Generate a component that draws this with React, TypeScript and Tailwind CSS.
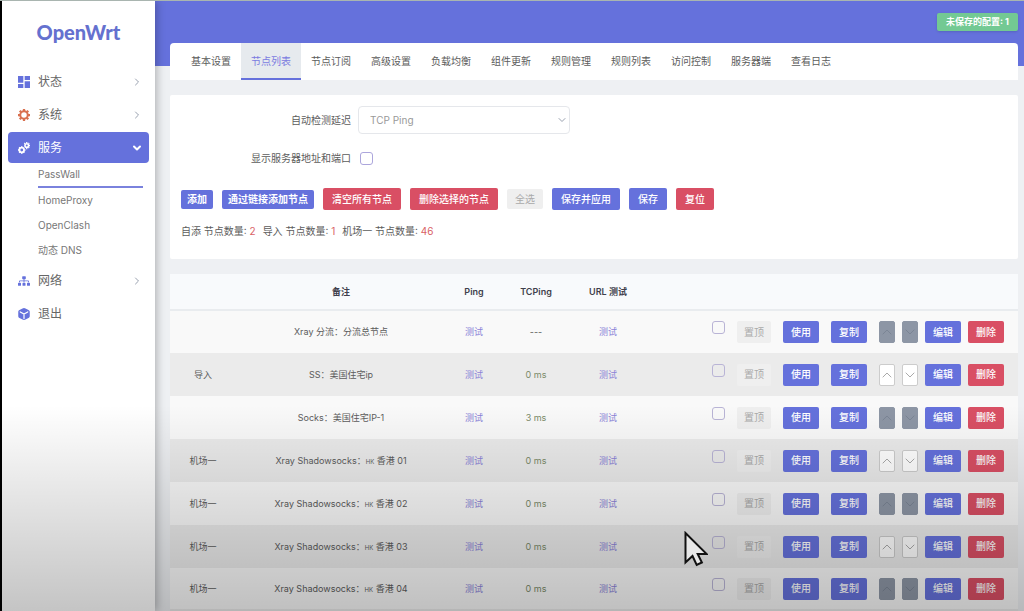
import React, { useState } from 'react';
import { ChevronDown, ChevronRight, ChevronUp } from 'lucide-react';
import { FaSitemap } from 'react-icons/fa';
import { MdDashboard } from 'react-icons/md';

interface ServerNode {
  id: number;
  group?: string;
  name: string;
  region?: string;
  title?: string;
  latency: string;
}

const tabs = [
  '基本设置',
  '节点列表',
  '节点订阅',
  '高级设置',
  '负载均衡',
  '组件更新',
  '规则管理',
  '规则列表',
  '访问控制',
  '服务器端',
  '查看日志',
];

const services = ['PassWall', 'HomeProxy', 'OpenClash', '动态 DNS'];

const counts = [
  { label: '自添 节点数量:', value: 2 },
  { label: '导入 节点数量:', value: 1 },
  { label: '机场一 节点数量:', value: 46 },
];

const nodes: ServerNode[] = [
  { id: 1, name: 'Xray 分流：分流总节点', latency: '---' },
  { id: 2, group: '导入', name: 'SS：美国住宅ip', latency: '0 ms' },
  { id: 3, name: 'Socks：美国住宅IP-1', latency: '3 ms' },
  { id: 4, group: '机场一', name: 'Xray Shadowsocks：', region: 'HK', title: '香港 01', latency: '0 ms' },
  { id: 5, group: '机场一', name: 'Xray Shadowsocks：', region: 'HK', title: '香港 02', latency: '0 ms' },
  { id: 6, group: '机场一', name: 'Xray Shadowsocks：', region: 'HK', title: '香港 03', latency: '0 ms' },
  { id: 7, group: '机场一', name: 'Xray Shadowsocks：', region: 'HK', title: '香港 04', latency: '0 ms' },
];

const GearIcon = () => (
  <svg viewBox="0 0 24 24" className="size-3 text-[#d9704f]" fill="none" stroke="currentColor">
    <circle cx="12" cy="12" r="7.5" strokeWidth="4" />
    <path
      strokeWidth="4.5"
      d="M12 0v4M12 20v4M0 12h4M20 12h4M3.5 3.5l2.8 2.8M17.7 17.7l2.8 2.8M3.5 20.5l2.8-2.8M17.7 6.3l2.8-2.8"
    />
  </svg>
);

const CogsIcon = () => (
  <svg viewBox="0 0 24 24" className="size-3" fill="none" stroke="currentColor">
    <circle cx="7.5" cy="16" r="4.6" strokeWidth="3.6" />
    <path strokeWidth="3" d="M7.5 8.5v2M7.5 21.5v2M0 16h2M13 16h2M2.2 10.7l1.4 1.4M11.4 19.9l1.4 1.4M2.2 21.3l1.4-1.4" />
    <circle cx="17.5" cy="7" r="3.6" strokeWidth="3.2" />
    <path strokeWidth="2.6" d="M17.5 0v2M17.5 12v2.4M22 7h2M21 3.5l1.4-1.4M21 10.5l1.4 1.4M14 3.5l-1.4-1.4" />
  </svg>
);

const CubeIcon = () => (
  <svg viewBox="0 0 24 24" className="size-3">
    <path
      fill="currentColor"
      d="M12 0c1 0 2 .4 3 1l6 3.2c1.6.9 2.5 2.2 2.5 4V16c0 1.8-1 3.2-2.5 4l-6 3.2c-2 1-4 1-6 0L3 20C1.4 19.2.5 17.8.5 16V8.2c0-1.8 1-3.2 2.5-4L9 1c1-.6 2-1 3-1z"
    />
    <path fill="none" stroke="white" strokeWidth="2.4" strokeLinecap="round" d="M4.5 7.8L12 12l7.5-4.2M12 12v9" />
  </svg>
);

interface MenuItemProps {
  icon: React.ReactNode;
  label: string;
  arrow?: React.ReactNode;
  active?: boolean;
}

const MenuItem = ({ icon, label, arrow, active }: MenuItemProps) => (
  <a
    href="#"
    className={`flex h-[31px] items-center gap-2 rounded pr-1.5 pl-2.5 text-xs ${
      active ? 'bg-[#6571dc] text-white' : 'text-[#666]'
    }`}
  >
    <span className={`flex w-3 shrink-0 justify-center ${active ? 'text-white' : 'text-[#6571dc]'}`}>{icon}</span>
    <span className="flex-1">{label}</span>
    {arrow}
  </a>
);

const Sidebar = () => (
  <aside className="z-10 w-[155px] shrink-0 border-l-2 border-black bg-white px-1.5 shadow-[2px_0_8px_rgba(0,0,0,0.25)]">
    <a
      href="#"
      className="mb-3 flex h-[53px] items-end justify-center pb-2 font-[Lato] text-xl leading-7 font-black text-[#6571cf]"
    >
      OpenWrt
    </a>
    <nav className="flex flex-col gap-0.5">
      <MenuItem
        icon={<MdDashboard className="size-4 shrink-0" />}
        label="状态"
        arrow={<ChevronRight size={12} className="text-gray-400" />}
      />
      <MenuItem icon={<GearIcon />} label="系统" arrow={<ChevronRight size={12} className="text-gray-400" />} />
      <div>
        <MenuItem icon={<CogsIcon />} label="服务" arrow={<ChevronDown size={12} strokeWidth={4} />} active />
        <ul className="pr-1.5 pl-[30px] text-[10px] text-[#777]">
          {services.map((service, i) => (
            <li key={service}>
              <a
                href="#"
                className={`flex h-[25px] items-center ${i === 0 ? 'border-b-2 border-[#7a82dd]' : ''}`}
              >
                {service}
              </a>
            </li>
          ))}
        </ul>
      </div>
      <MenuItem
        icon={<FaSitemap className="size-3" />}
        label="网络"
        arrow={<ChevronRight size={12} className="text-gray-400" />}
      />
      <MenuItem icon={<CubeIcon />} label="退出" />
    </nav>
  </aside>
);

const NodeRow = ({ node, striped }: { node: ServerNode; striped: boolean }) => {
  const arrowStyle = striped
    ? 'border border-[#ccc] bg-white text-[#aaa]'
    : 'border border-[#8d96a5] bg-[#8d96a5] text-[#7b8595]';

  return (
    <tr className={striped ? 'h-[43px] bg-[#ebebeb]' : 'h-[43px] bg-[#f9f9f9]'}>
      <td>{node.group}</td>
      <td>
        {node.name}
        {node.region && <span className="text-[6px]">{node.region}</span>} {node.title}
      </td>
      <td>
        <a href="#" className="text-[#8b83d8]">测试</a>
      </td>
      <td className={node.latency === '---' ? '' : 'text-[#7b8a68]'}>{node.latency}</td>
      <td>
        <a href="#" className="text-[#8b83d8]">测试</a>
      </td>
      <td className="pr-3.5">
        <div className="flex justify-end gap-3 text-[10px] font-medium text-white">
          <input
            type="checkbox"
            aria-label="选择节点"
            className="size-[13px] appearance-none rounded-[3px] border border-[#b9b4d6] checked:bg-[#6571dc]"
          />
          <button disabled className="h-[22px] rounded-xs bg-[#efefef] px-[7px] font-normal text-[#aaa]">
            置顶
          </button>
          <button className="h-[22px] rounded-xs bg-[#6571dc] px-2">使用</button>
          <button className="h-[22px] rounded-xs bg-[#6571dc] px-2">复制</button>
          <div className="flex gap-[7px]">
            <button aria-label="上移" className={`flex h-[22px] w-4 items-center justify-center rounded-xs ${arrowStyle}`}>
              <ChevronUp size={16} strokeWidth={1.5} className="shrink-0" />
            </button>
            <button aria-label="下移" className={`flex h-[22px] w-4 items-center justify-center rounded-xs ${arrowStyle}`}>
              <ChevronDown size={16} strokeWidth={1.5} className="shrink-0" />
            </button>
            <button className="h-[22px] rounded-xs bg-[#6571dc] px-2">编辑</button>
            <button className="h-[22px] rounded-xs bg-[#d94f64] px-2">删除</button>
          </div>
        </div>
      </td>
    </tr>
  );
};

const App = () => {
  const [method, setMethod] = useState('tcping');
  const [showAddress, setShowAddress] = useState(false);

  return (
    <div className="relative flex h-screen overflow-hidden border-t border-[#a9b5b0] font-[Inter,'Noto_Sans_CJK_SC',sans-serif] text-[#5c5c5c]">
      <Sidebar />

      <main className="min-w-0 flex-1 bg-[linear-gradient(#6571dc_65px,#eef0f3_65px)] pr-1.5 pl-[15px]">
        <header className="flex h-[42px] items-center justify-end">
          <a
            href="#"
            className="flex h-[18px] items-center rounded-xs bg-[#73c993] px-[9px] text-[9px] font-bold text-white shadow-sm"
          >
            未保存的配置: 1
          </a>
        </header>

        {/* Tabs */}
        <nav className="flex h-[37px] rounded-t bg-white px-[11px] text-[10px]">
          {tabs.map((tab) => (
            <a
              key={tab}
              href="#"
              className={`flex items-center border-y-2 border-t-transparent px-2.5 ${
                tab === '节点列表' ? 'border-b-[#6571dc] bg-[#e6eaee] text-[#7b7be0]' : 'border-b-transparent'
              }`}
            >
              {tab}
            </a>
          ))}
        </nav>

        {/* Settings */}
        <section className="mt-[15px] rounded-xs bg-white px-[11px] pt-[11px] pb-5 text-[10px]">
          <div className="flex items-center gap-[7px]">
            <label htmlFor="method" className="w-[170px] text-right">
              自动检测延迟
            </label>
            <div className="relative w-[212px]">
              <select
                id="method"
                value={method}
                onChange={(e) => setMethod(e.target.value)}
                className="h-7 w-full appearance-none rounded-sm border border-gray-200 bg-white px-[11px] text-[#999]"
              >
                <option value="tcping">TCP Ping</option>
                <option value="ping">Ping</option>
              </select>
              <ChevronDown size={12} className="pointer-events-none absolute top-2 right-0.5 text-gray-400" />
            </div>
          </div>
          <div className="mt-[11px] flex h-[26px] items-center gap-[9px]">
            <label htmlFor="show-address" className="w-[170px] text-right">
              显示服务器地址和端口
            </label>
            <input
              id="show-address"
              type="checkbox"
              checked={showAddress}
              onChange={(e) => setShowAddress(e.target.checked)}
              className="size-[13px] appearance-none rounded-[3px] border border-[#aca6dc] checked:bg-[#6571dc]"
            />
          </div>

          <div className="mt-[17px] flex items-center gap-[9px] font-medium text-white">
            <button className="h-[19px] rounded-xs bg-[#6571dc] px-1.5 font-bold">添加</button>
            <button className="h-[19px] rounded-xs bg-[#6571dc] px-1.5 font-bold">通过链接添加节点</button>
            <button className="h-[22px] rounded-xs bg-[#d94f64] px-[9px]">清空所有节点</button>
            <button className="h-[22px] rounded-xs bg-[#d94f64] px-[9px]">删除选择的节点</button>
            <button className="h-5 rounded-xs bg-[#efefef] px-2 font-normal text-[#aaa]">全选</button>
            <button className="h-[22px] rounded-xs bg-[#6571dc] px-[9px]">保存并应用</button>
            <button className="h-[22px] rounded-xs bg-[#6571dc] px-[9px]">保存</button>
            <button className="h-[22px] rounded-xs bg-[#d94f64] px-[9px]">复位</button>
          </div>

          <div className="mt-[13px] flex h-4 items-center gap-[7px]">
            {counts.map((count) => (
              <span key={count.label}>
                {count.label} <span className="text-[#d95f66]">{count.value}</span>
              </span>
            ))}
          </div>
        </section>

        {/* Node list */}
        <table className="mt-[15px] w-full table-fixed border-b-4 border-[#ebebeb] text-center text-[9px]">
          <thead>
            <tr className="h-9 border-b-2 border-[#e9ecef] bg-[#f8fafc] text-[#3f3f4c]">
              <th className="w-[66px]" />
              <th className="w-[210px] font-semibold">备注</th>
              <th className="w-14 font-semibold">Ping</th>
              <th className="w-[68px] font-semibold">TCPing</th>
              <th className="w-[76px] font-semibold">URL 测试</th>
              <th />
            </tr>
          </thead>
          <tbody>
            {nodes.map((node, i) => (
              <NodeRow key={node.id} node={node} striped={i % 2 === 1} />
            ))}
          </tbody>
        </table>
      </main>

      {/* Bottom fade */}
      <div className="pointer-events-none absolute inset-x-0 bottom-0 z-20 h-[206px] bg-linear-to-b from-black/0 to-black/23" />

      {/* Mouse pointer */}
      <svg viewBox="0 0 24 36" className="pointer-events-none absolute top-[530px] left-[684px] z-30 h-9 w-6">
        <path
          d="M1.5 2v29.5l7-6.500 4.200 9 5.200-2.500-4.200-8.500h9z"
          fill="#e8e8e8"
          stroke="#111"
          strokeWidth="2"
        />
      </svg>
    </div>
  );
};

export default App;
